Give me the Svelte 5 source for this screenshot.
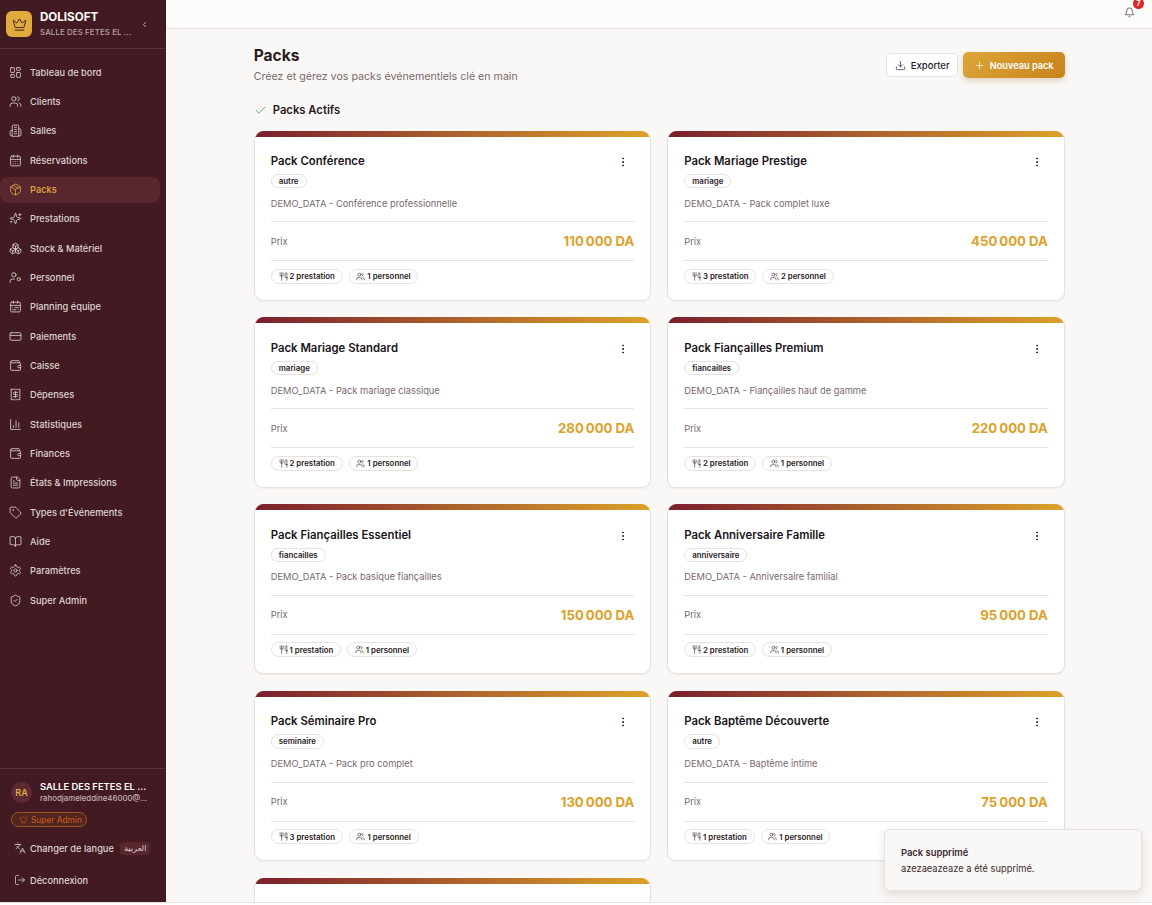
<script>
  const I = {
    dash: '<rect x="3" y="3" width="7" height="9" rx="1"/><rect x="14" y="3" width="7" height="5" rx="1"/><rect x="14" y="12" width="7" height="9" rx="1"/><rect x="3" y="16" width="7" height="5" rx="1"/>',
    users: '<path d="M16 21v-2a4 4 0 0 0-4-4H6a4 4 0 0 0-4 4v2"/><circle cx="9" cy="7" r="4"/><path d="M22 21v-2a4 4 0 0 0-3-3.87"/><path d="M16 3.13a4 4 0 0 1 0 7.75"/>',
    building: '<path d="M6 22V4a2 2 0 0 1 2-2h8a2 2 0 0 1 2 2v18Z"/><path d="M6 12H4a2 2 0 0 0-2 2v6a2 2 0 0 0 2 2h2"/><path d="M18 9h2a2 2 0 0 1 2 2v9a2 2 0 0 1-2 2h-2"/><path d="M10 6h4M10 10h4M10 14h4M10 18h4"/>',
    cal: '<path d="M8 2v4M16 2v4"/><rect x="3" y="4" width="18" height="18" rx="2"/><path d="M3 10h18M8 14h.01M12 14h.01M16 14h.01M8 18h.01M12 18h.01M16 18h.01"/>',
    pack: '<path d="M11 21.73a2 2 0 0 0 2 0l7-4A2 2 0 0 0 21 16V8a2 2 0 0 0-1-1.73l-7-4a2 2 0 0 0-2 0l-7 4A2 2 0 0 0 3 8v8a2 2 0 0 0 1 1.73z"/><path d="M12 22V12"/><polyline points="3.29 7 12 12 20.71 7"/><path d="m7.5 4.27 9 5.15"/>',
    spark: '<path d="M9.937 15.5A2 2 0 0 0 8.5 14.063l-6.135-1.582a.5.5 0 0 1 0-.962L8.5 9.936A2 2 0 0 0 9.937 8.5l1.582-6.135a.5.5 0 0 1 .963 0L14.063 8.5A2 2 0 0 0 15.5 9.937l6.135 1.581a.5.5 0 0 1 0 .964L15.5 14.063a2 2 0 0 0-1.437 1.437l-1.582 6.135a.5.5 0 0 1-.963 0z"/><path d="M20 3v4M22 5h-4M4 17v2M5 18H3"/>',
    boxes: '<path d="M2.97 12.92A2 2 0 0 0 2 14.63v3.24a2 2 0 0 0 .97 1.71l3 1.8a2 2 0 0 0 2.06 0L12 19v-5.5l-5-3-4.03 2.42Z"/><path d="m7 16.5-4.74-2.85M7 16.5l5-3M7 16.5v5.17"/><path d="M12 13.5V19l3.97 2.38a2 2 0 0 0 2.06 0l3-1.8a2 2 0 0 0 .97-1.71v-3.24a2 2 0 0 0-.97-1.71L17 10.5l-5 3Z"/><path d="m17 16.5-5-3M17 16.5l4.74-2.85M17 16.5v5.17"/><path d="M7.97 4.42A2 2 0 0 0 7 6.13v4.37l5 3 5-3V6.13a2 2 0 0 0-.97-1.71l-3-1.8a2 2 0 0 0-2.06 0l-3 1.8Z"/><path d="M12 8 7.26 5.15M12 8l4.74-2.85M12 13.5V8"/>',
    ucog: '<circle cx="18" cy="15" r="3"/><circle cx="9" cy="7" r="4"/><path d="M10 15H6a4 4 0 0 0-4 4v2"/>',
    calr: '<rect x="3" y="4" width="18" height="18" rx="2"/><path d="M16 2v4M3 10h18M8 2v4M17 14h-6M13 18H7M7 14h.01M17 18h.01"/>',
    card: '<rect x="2" y="5" width="20" height="14" rx="2"/><line x1="2" x2="22" y1="10" y2="10"/>',
    wallet: '<path d="M19 7V4a1 1 0 0 0-1-1H5a2 2 0 0 0 0 4h15a1 1 0 0 1 1 1v4h-3a2 2 0 0 0 0 4h3a1 1 0 0 0 1-1v-2a1 1 0 0 0-1-1"/><path d="M3 5v14a2 2 0 0 0 2 2h15a1 1 0 0 0 1-1v-4"/>',
    receipt: '<path d="M4 2v20l2-1 2 1 2-1 2 1 2-1 2 1 2-1 2 1V2l-2 1-2-1-2 1-2-1-2 1-2-1-2 1Z"/><path d="M16 8h-6a2 2 0 1 0 0 4h4a2 2 0 1 1 0 4H8"/><path d="M12 17.5v-11"/>',
    chart: '<path d="M3 3v18h18"/><path d="M18 17V9M13 17V5M8 17v-3"/>',
    file: '<path d="M15 2H6a2 2 0 0 0-2 2v16a2 2 0 0 0 2 2h12a2 2 0 0 0 2-2V7Z"/><path d="M14 2v4a2 2 0 0 0 2 2h4"/><path d="M10 9H8M16 13H8M16 17H8"/>',
    tag: '<path d="M12.586 2.586A2 2 0 0 0 11.172 2H4a2 2 0 0 0-2 2v7.172a2 2 0 0 0 .586 1.414l8.704 8.704a2.426 2.426 0 0 0 3.42 0l6.58-6.58a2.426 2.426 0 0 0 0-3.42z"/><circle cx="7.5" cy="7.5" r=".5"/>',
    book: '<path d="M12 7v14"/><path d="M3 18a1 1 0 0 1-1-1V4a1 1 0 0 1 1-1h5a4 4 0 0 1 4 4 4 4 0 0 1 4-4h5a1 1 0 0 1 1 1v13a1 1 0 0 1-1 1h-6a3 3 0 0 0-3 3 3 3 0 0 0-3-3z"/>',
    gear: '<path d="M12.22 2h-.44a2 2 0 0 0-2 2v.18a2 2 0 0 1-1 1.73l-.43.25a2 2 0 0 1-2 0l-.15-.08a2 2 0 0 0-2.73.73l-.22.38a2 2 0 0 0 .73 2.73l.15.1a2 2 0 0 1 1 1.72v.51a2 2 0 0 1-1 1.74l-.15.09a2 2 0 0 0-.73 2.73l.22.38a2 2 0 0 0 2.73.73l.15-.08a2 2 0 0 1 2 0l.43.25a2 2 0 0 1 1 1.73V20a2 2 0 0 0 2 2h.44a2 2 0 0 0 2-2v-.18a2 2 0 0 1 1-1.73l.43-.25a2 2 0 0 1 2 0l.15.08a2 2 0 0 0 2.73-.73l.22-.39a2 2 0 0 0-.73-2.73l-.15-.08a2 2 0 0 1-1-1.74v-.5a2 2 0 0 1 1-1.74l.15-.09a2 2 0 0 0 .73-2.73l-.22-.38a2 2 0 0 0-2.73-.73l-.15.08a2 2 0 0 1-2 0l-.43-.25a2 2 0 0 1-1-1.73V4a2 2 0 0 0-2-2z"/><circle cx="12" cy="12" r="3"/>',
    shield: '<path d="M20 13c0 5-3.5 7.5-7.66 8.95a1 1 0 0 1-.67-.01C7.5 20.5 4 18 4 13V6a1 1 0 0 1 1-1c2 0 4.5-1.2 6.24-2.72a1.17 1.17 0 0 1 1.52 0C14.51 3.81 17 5 19 5a1 1 0 0 1 1 1z"/><path d="m9 12 2 2 4-4"/>',
    crown: '<path d="M11.562 3.266a.5.5 0 0 1 .876 0L15.39 8.87a1 1 0 0 0 1.516.294L21.183 5.5a.5.5 0 0 1 .798.519l-2.834 10.246a1 1 0 0 1-.956.734H5.81a1 1 0 0 1-.957-.734L2.02 6.02a.5.5 0 0 1 .798-.519l4.276 3.664a1 1 0 0 0 1.516-.294z"/><path d="M5 21h14"/>',
    lang: '<path d="m5 8 6 6M4 14l6-6 2-3M2 5h12M7 2h1M22 22l-5-10-5 10M14 18h6"/>',
    out: '<path d="M9 21H5a2 2 0 0 1-2-2V5a2 2 0 0 1 2-2h4"/><polyline points="16 17 21 12 16 7"/><line x1="21" x2="9" y1="12" y2="12"/>',
    bell: '<path d="M10.268 21a2 2 0 0 0 3.464 0"/><path d="M3.262 15.326A1 1 0 0 0 4 17h16a1 1 0 0 0 .74-1.673C19.41 13.956 18 12.499 18 8A6 6 0 0 0 6 8c0 4.499-1.411 5.956-2.738 7.326"/>',
    dl: '<path d="M21 15v4a2 2 0 0 1-2 2H5a2 2 0 0 1-2-2v-4"/><polyline points="7 10 12 15 17 10"/><line x1="12" x2="12" y1="15" y2="3"/>',
    plus: '<path d="M5 12h14M12 5v14"/>',
    check: '<path d="M20 6 9 17l-5-5"/>',
    fork: '<path d="M3 2v7c0 1.1.9 2 2 2h4a2 2 0 0 0 2-2V2"/><path d="M7 2v20"/><path d="M21 15V2a5 5 0 0 0-5 5v6c0 1.1.9 2 2 2h3Zm0 0v7"/>',
    left: '<path d="m15 18-6-6 6-6"/>',
    more: '<circle cx="12" cy="5" r="1"/><circle cx="12" cy="12" r="1"/><circle cx="12" cy="19" r="1"/>'
  };

  const nav = [
    ['dash', 'Tableau de bord'], ['users', 'Clients'], ['building', 'Salles'], ['cal', 'Réservations'],
    ['pack', 'Packs'], ['spark', 'Prestations'], ['boxes', 'Stock & Matériel'], ['ucog', 'Personnel'],
    ['calr', 'Planning équipe'], ['card', 'Paiements'], ['wallet', 'Caisse'], ['receipt', 'Dépenses'],
    ['chart', 'Statistiques'], ['wallet', 'Finances'], ['file', 'États & Impressions'], ['tag', "Types d'Événements"],
    ['book', 'Aide'], ['gear', 'Paramètres'], ['shield', 'Super Admin']
  ];

  const packs = [
    { t: 'Pack Conférence', c: 'autre', d: 'Conférence professionnelle', p: '110\u202f000 DA', a: 2, b: 1 },
    { t: 'Pack Mariage Prestige', c: 'mariage', d: 'Pack complet luxe', p: '450\u202f000 DA', a: 3, b: 2 },
    { t: 'Pack Mariage Standard', c: 'mariage', d: 'Pack mariage classique', p: '280\u202f000 DA', a: 2, b: 1 },
    { t: 'Pack Fiançailles Premium', c: 'fiancailles', d: 'Fiançailles haut de gamme', p: '220\u202f000 DA', a: 2, b: 1 },
    { t: 'Pack Fiançailles Essentiel', c: 'fiancailles', d: 'Pack basique fiançailles', p: '150\u202f000 DA', a: 1, b: 1 },
    { t: 'Pack Anniversaire Famille', c: 'anniversaire', d: 'Anniversaire familial', p: '95\u202f000 DA', a: 2, b: 1 },
    { t: 'Pack Séminaire Pro', c: 'seminaire', d: 'Pack pro complet', p: '130\u202f000 DA', a: 3, b: 1 },
    { t: 'Pack Baptême Découverte', c: 'autre', d: 'Baptême intime', p: '75\u202f000 DA', a: 1, b: 1 }
  ];
</script>

{#snippet icon(name, cls)}
  <svg class={cls} viewBox="0 0 24 24" fill="none" stroke="currentColor" stroke-linecap="round" stroke-linejoin="round">{@html I[name]}</svg>
{/snippet}

<div class="app">
  <aside class="side">
    <div class="brand">
      <div class="logo">{@render icon('crown', 'i15')}</div>
      <div class="brand-text">
        <div class="brand-name">DOLISOFT</div>
        <div class="brand-sub">SALLE DES FETES EL ...</div>
      </div>
      {@render icon('left', 'i9 chev')}
    </div>
    <nav class="nav">
      {#each nav as [ic, label]}
        <div class="item" class:active={label === 'Packs'}>
          {@render icon(ic, 'i13')}
          <span>{label}</span>
        </div>
      {/each}
    </nav>
    <div class="foot">
      <div class="user">
        <div class="avatar">RA</div>
        <div class="user-text">
          <div class="user-name">SALLE DES FETES EL ...</div>
          <div class="user-mail">rahodjameleddine46000@...</div>
        </div>
      </div>
      <div class="role">{@render icon('crown', 'i8')}<span>Super Admin</span></div>
      <div class="lang">
        {@render icon('lang', 'i12')}
        <span class="lang-label">Changer de langue</span>
        <span class="ar" lang="ar">العربية</span>
      </div>
      <div class="logout">{@render icon('out', 'i12')}<span>Déconnexion</span></div>
    </div>
  </aside>

  <div class="main">
    <header class="top">
      <div class="bell">
        {@render icon('bell', 'i11')}
        <span class="badge">7</span>
      </div>
    </header>
    <div class="page">
      <div class="head">
        <div>
          <h1>Packs</h1>
          <p class="sub">Créez et gérez vos packs événementiels clé en main</p>
        </div>
        <div class="actions">
          <button class="export">{@render icon('dl', 'i11')}Exporter</button>
          <button class="new">{@render icon('plus', 'i11')}Nouveau pack</button>
        </div>
      </div>
      <h2>{@render icon('check', 'i13 ok')}<span>Packs Actifs</span></h2>
      <div class="grid">
        {#each packs as k}
          <article class="pack">
            <div class="strip"></div>
            <div class="body">
              <div class="title-row">
                <div>
                  <h3>{k.t}</h3>
                  <span class="pill">{k.c}</span>
                </div>
                <span class="more">{@render icon('more', 'i12')}</span>
              </div>
              <p class="desc">DEMO_DATA - {k.d}</p>
              <div class="price"><span>Prix</span><strong>{k.p}</strong></div>
              <div class="chips">
                <span class="chip">{@render icon('fork', 'i9')}{k.a} prestation</span>
                <span class="chip">{@render icon('users', 'i9')}{k.b} personnel</span>
              </div>
            </div>
          </article>
        {/each}
        <article class="pack">
          <div class="strip"></div>
          <div class="body"></div>
        </article>
      </div>
    </div>
  </div>

  <div class="toast">
    <div class="toast-title">Pack supprimé</div>
    <div class="toast-text">azezaeazeaze a été supprimé.</div>
  </div>
</div>

<style>
  :global(body) {
    margin: 0;
    background: #fff;
    font-family: Inter, "Noto Sans", sans-serif;
    color: #2a1a1d;
  }
  * { box-sizing: border-box; }
  svg { flex: none; stroke-width: 1.5; display: block; }
  .i8 { width: 9px; height: 9px; }
  .i9 { width: 9px; height: 9px; }
  .i11 { width: 11px; height: 11px; }
  .i12 { width: 12px; height: 12px; }
  .i13 { width: 13px; height: 13px; }
  .i15 { width: 15px; height: 15px; }

  .app {
    display: flex;
    height: 903px;
    overflow: hidden;
    position: relative;
    background: #faf8f6;
    border-bottom: 1px solid #e8e2de;
  }
  .side {
    width: 166px;
    flex: none;
    background: #421a21;
    color: #dcd3d4;
    display: flex;
    flex-direction: column;
  }
  .brand {
    height: 49px;
    border-bottom: 1px solid #5c3038;
    display: flex;
    align-items: center;
    padding: 0 17px 0 6px;
    gap: 8px;
  }
  .logo {
    width: 26px;
    height: 26px;
    border-radius: 6px;
    background: #e0aa3e;
    color: #421a21;
    display: grid;
    place-items: center;
    flex: none;
  }
  .brand-text { flex: 1; min-width: 0; white-space: nowrap; }
  .brand-name { font-size: 11.6px; line-height: 15px; font-weight: 700; color: #fff; margin-top: -1px; }
  .brand-sub { font-size: 7.9px; line-height: 12px; font-weight: 500; color: #b5a3a6; margin-top: 1px; letter-spacing: .1px; }
  .chev { color: #dcd3d4; stroke-width: 2; }

  .nav {
    padding: 10.2px 6px 0 0;
    display: flex;
    flex-direction: column;
    gap: 3.33px;
    flex: 1;
  }
  .item {
    height: 26px;
    display: flex;
    align-items: center;
    gap: 8.5px;
    padding-left: 8.5px;
    border-radius: 8px;
    font-size: 9.25px;
    font-weight: 500;
  }
  .item.active { background: #57262f; color: #e0aa3e; }

  .foot {
    border-top: 1px solid #5c3038;
    height: 134px;
    flex: none;
    padding: 13px 11px 0;
    font-size: 9.25px;
    font-weight: 500;
  }
  .user { display: flex; gap: 8px; align-items: center; height: 21px; }
  .avatar {
    width: 21px;
    height: 21px;
    border-radius: 50%;
    background: #5c2a33;
    color: #e0aa3e;
    font-size: 9px;
    font-weight: 600;
    display: grid;
    place-items: center;
    flex: none;
  }
  .user-text { white-space: nowrap; min-width: 0; }
  .user-name { font-size: 9.4px; line-height: 12px; font-weight: 600; color: #fff; }
  .user-mail { font-size: 7.85px; line-height: 11px; color: #c0b2b4; }
  .role {
    margin-top: 9px;
    width: 76px;
    height: 15px;
    border: 1px solid #a0561c;
    border-radius: 8px;
    background: #4f2520;
    color: #c05a1c;
    font-size: 8.25px;
    display: flex;
    align-items: center;
    gap: 3px;
    padding-left: 7px;
  }
  .lang {
    margin-top: 14px;
    height: 14px;
    display: flex;
    align-items: center;
    gap: 4px;
    padding-left: 3px;
  }
  .lang-label { white-space: nowrap; }
  .ar {
    margin-left: 2px;
    background: #57262f;
    border-radius: 3px;
    font-size: 8.25px;
    line-height: 13px;
    padding: 0 4px;
    font-family: "DejaVu Sans", sans-serif;
    white-space: nowrap;
  }
  .logout {
    margin-top: 18px;
    height: 14px;
    display: flex;
    align-items: center;
    gap: 4px;
    padding-left: 3px;
  }

  .main { flex: 1; min-width: 0; }
  .top {
    height: 29px;
    background: #fdfcfb;
    border-bottom: 1px solid #e8e0dc;
    display: flex;
    justify-content: flex-end;
    align-items: center;
    padding-right: 17px;
  }
  .bell { position: relative; color: #3a2a2d; margin-top: -4px; }
  .badge {
    position: absolute;
    top: -9px;
    left: 9px;
    width: 11px;
    height: 11px;
    border-radius: 50%;
    background: #dc2626;
    color: #fff;
    font-size: 7px;
    font-weight: 700;
    display: grid;
    place-items: center;
  }
  .page { width: 811px; margin-left: 87.75px; }
  .head {
    display: flex;
    justify-content: space-between;
    align-items: center;
    padding-top: 12.5px;
  }
  h1 { font-size: 15.5px; line-height: 27px; font-weight: 700; margin: 0; color: #2a1a1d; }
  .sub { font-size: 10.65px; line-height: 15px; margin: 0; color: #7a686c; }
  .actions { display: flex; align-items: center; gap: 5px; margin-top: 5px; }
  button { font-family: inherit; display: flex; align-items: center; }
  .export {
    height: 24px;
    width: 72px;
    border: 1px solid #e8e0dc;
    border-radius: 5px;
    background: #fff;
    color: #2a1a2d;
    font-size: 9.5px;
    font-weight: 500;
    gap: 5px;
    padding: 0 0 0 8px;
  }
  .new {
    height: 26px;
    width: 102px;
    border: 0;
    border-radius: 5px;
    background: linear-gradient(135deg, #dca63a, #c9821c);
    color: #fff;
    font-size: 9.2px;
    font-weight: 600;
    gap: 5px;
    padding: 0 0 0 11px;
    box-shadow: 0 3px 6px rgba(150, 100, 30, .25);
  }
  h2 {
    margin: 16.5px 0 10.5px;
    font-size: 11.25px;
    line-height: 20px;
    font-weight: 600;
    display: flex;
    align-items: center;
    gap: 6px;
    color: #2a1a1d;
  }
  .ok { color: #2f9e6a; }
  .grid {
    display: grid;
    grid-template-columns: 1fr 1fr;
    gap: 16.5px 16px;
  }
  .pack {
    background: #fff;
    border: 1px solid #e8e0dc;
    border-top: 0;
    border-radius: 9px;
    overflow: hidden;
    box-shadow: 0 1px 2px rgba(60, 30, 30, .06);
    height: 170.25px;
  }
  .strip { height: 6px; background: linear-gradient(90deg, #7b1f2e, #dca12a); }
  .body { padding: 16.5px 16px 0; }
  .title-row { display: flex; justify-content: space-between; align-items: flex-start; }
  h3 { margin: 0 0 3.5px; font-size: 11.35px; line-height: 17.5px; font-weight: 600; color: #20141a; }
  .pill {
    display: block;
    width: fit-content;
    height: 14.25px;
    line-height: 12.25px;
    padding: 0 7px;
    border: 1px solid #e8e0dc;
    border-radius: 8px;
    font-size: 7.9px;
    font-weight: 600;
  }
  .more { width: 22.5px; height: 18px; display: grid; place-items: center; color: #20141a; }
  .more :global(svg) { stroke-width: 2; }
  .desc {
    margin: 7.5px 0 0;
    font-size: 9.3px;
    line-height: 15px;
    color: #7a686c;
    padding-bottom: 10.5px;
    border-bottom: 1px solid #e8e0dc;
  }
  .price {
    height: 39px;
    display: flex;
    justify-content: space-between;
    align-items: center;
    border-bottom: 1px solid #e8e0dc;
    font-size: 9.3px;
    color: #7a686c;
  }
  .price strong { font-size: 13.15px; font-weight: 700; color: #dca12a; }
  .chips { display: flex; gap: 6px; margin-top: 7.5px; }
  .chip {
    height: 15px;
    display: flex;
    align-items: center;
    gap: 2px;
    padding: 0 6.75px;
    border: 1px solid #e8e0dc;
    border-radius: 8px;
    font-size: 7.85px;
    font-weight: 600;
  }
  .toast {
    position: absolute;
    left: 884px;
    top: 829px;
    width: 258px;
    height: 62px;
    background: #faf8f6;
    border: 1px solid #e8e0dc;
    border-radius: 6px;
    box-shadow: 0 4px 10px rgba(60, 30, 30, .12);
    padding: 15px 16px 0;
    color: #3a2a2d;
  }
  .toast-title { font-size: 9.4px; line-height: 15px; font-weight: 600; }
  .toast-text { font-size: 9.3px; line-height: 18px; }
</style>
